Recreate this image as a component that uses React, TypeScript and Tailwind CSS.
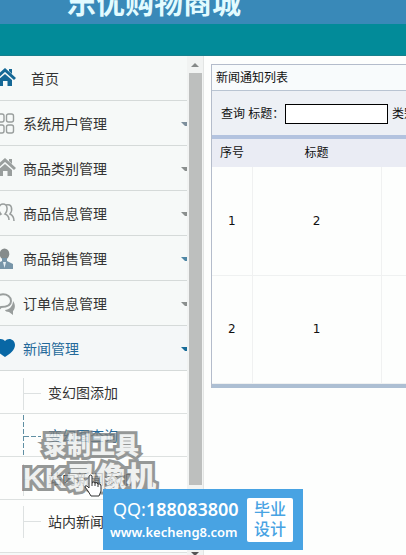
import type { ReactNode } from "react";

const menus = [
  { name: "系统用户管理", icon: "grid", arrow: "text-[#7d8f9c]" },
  { name: "商品类别管理", icon: "home", arrow: "text-[#8a8f8e]" },
  { name: "商品信息管理", icon: "users", arrow: "text-[#8a8f8e]" },
  { name: "商品销售管理", icon: "person", arrow: "text-[#4f87a5]" },
  { name: "订单信息管理", icon: "chat", arrow: "text-[#8a8f8e]" },
];

const news = [
  { id: 1, title: "2" },
  { id: 2, title: "1" },
];

const shapes: Record<string, ReactNode> = {
  home: (
    <>
      <path d="M-5 11 L5 2 L15 11" fill="none" stroke="currentColor" strokeWidth="3" />
      <path d="M-2 12 L5 6 L12 12 V18 H7.500 V13 H3 V18 H-2Z" fill="currentColor" />
      <path d="M9 1h3v5l-3-3z" fill="currentColor" />
    </>
  ),
  grid: (
    <g fill="none" stroke="currentColor" strokeWidth="1.4">
      <rect x="-3" y="1" width="7" height="8" rx="2" />
      <rect x="6.500" y="1" width="7" height="8" rx="2" />
      <rect x="-3" y="12" width="7" height="8" rx="2" />
      <rect x="6.500" y="12" width="7" height="8" rx="2" />
    </g>
  ),
  users: (
    <g fill="none" stroke="currentColor" strokeWidth="1.5">
      <path d="M-3 16c0-3 2-4 4-5-3-3-3-10 2-10s5 7 2 10c3 1 4 3 4 6" />
      <path d="M6 2c6-2 7 5 4 9 2 1 4 4 4 7" />
    </g>
  ),
  person: (
    <>
      <ellipse cx="4.500" cy="6" rx="4.800" ry="5.500" fill="#858b8b" />
      <path d="M2 10h5v3l6 3v5H-4v-5l6-3z" fill="#7795a8" />
      <path d="M3 14h3l-1.500 6z" fill="#e6eff3" />
    </>
  ),
  chat: (
    <>
      <path
        d="M-2 14c-2 0-3-3-3-6 0-9 16-9 16 0 0 6-7 6-10 6l-3 3z"
        fill="none"
        stroke="currentColor"
        strokeWidth="2"
      />
      <path d="M13 8c3 4 2 8 0 10v4l-4-3c-2 0-4-1-4-2 4 0 8-4 8-9z" fill="currentColor" />
    </>
  ),
  heart: (
    <path d="M5 3c3-4 10-2 10 4 0 5-5 9-10 12C0 16-5 12-5 7-5 1 2-1 5 3z" fill="currentColor" />
  ),
};

function Icon({ name }: { name: string }) {
  return (
    <svg className="h-[22px] w-4 shrink-0" viewBox="0 0 16 22" aria-hidden="true">
      {shapes[name]}
    </svg>
  );
}

function Arrow({ color }: { color: string }) {
  return (
    <svg className={`ml-auto h-1 w-[6px] ${color}`} viewBox="0 0 6 4" aria-hidden="true">
      <path d="M0 0h6v4H4z" fill="currentColor" />
    </svg>
  );
}

function Branch({ active }: { active?: boolean }) {
  return (
    <svg
      className={`h-[42px] w-12 shrink-0 ${active ? "text-[#5f8fa3]" : "text-[#dde1e1]"}`}
      viewBox="0 0 48 42"
      aria-hidden="true"
    >
      <path
        d={active ? "M23.500 0V42M24 21.500H41" : "M23.500 6V38M24 21.500H41"}
        fill="none"
        stroke="currentColor"
        strokeDasharray={active ? "5 2" : undefined}
      />
    </svg>
  );
}

function Sidebar() {
  return (
    <nav className="w-[187px] shrink-0 bg-[#f6f9f8] text-sm text-[#333]">
      <a href="#home" className="flex h-[45px] items-center border-b border-[#d5dad9] pt-[2px]">
        <span className="flex text-[#156896]">
          <Icon name="home" />
        </span>
        <span className="pl-[15px]">首页</span>
      </a>
      {menus.map((menu) => (
        <button
          key={menu.name}
          className="flex h-[45px] w-full items-center border-b border-[#d5dad9] pt-[2px] text-left"
        >
          <span className="flex text-[#999e9d]">
            <Icon name={menu.icon} />
          </span>
          <span className="pl-[7px]">{menu.name}</span>
          <Arrow color={menu.arrow} />
        </button>
      ))}
      <button className="flex h-[45px] w-full items-center border-b border-[#d5dad9] bg-[#f4f7f8] pt-[2px] text-left text-[#24699a]">
        <span className="flex text-[#0867a5]">
          <Icon name="heart" />
        </span>
        <span className="pl-[7px]">新闻管理</span>
        <Arrow color="text-[#176c99]" />
      </button>
      <div className="bg-[#fdfefd]">
        <a href="#add" className="flex h-[43px] items-center border-b border-[#dde1e0] pt-[2px]">
          <Branch />
          变幻图添加
        </a>
        <a
          href="#query"
          className="flex h-[43px] items-center border-b border-[#dde1e0] pt-[2px] text-[#24699a]"
        >
          <Branch active />
          变幻图查询
        </a>
        <a href="#news-add" className="flex h-[43px] items-center border-b border-[#dde1e0] pt-[2px]">
          <Branch />
          站内新闻添加
        </a>
        <a href="#news-query" className="flex h-[53px] items-start border-b border-[#dde1e0]">
          <Branch />
          <span className="pt-3">站内新闻</span>
        </a>
      </div>
    </nav>
  );
}

function ScrollTrack() {
  return (
    <div className="flex w-[17px] shrink-0 flex-col items-center border-r border-[#e3e5e4] bg-[#f1f3f2]">
      <svg className="h-[17px] w-4" viewBox="0 0 16 17" aria-hidden="true">
        <path d="M4 11L8 7l4 4z" fill="#858988" />
      </svg>
      <div className="h-[412px] w-[13px] bg-[#bdbfbe]" />
      <svg className="mt-auto h-1 w-4" viewBox="0 0 16 4" aria-hidden="true">
        <path d="M4 1h8L9 4H7z" fill="#555" />
      </svg>
    </div>
  );
}

function NewsList() {
  return (
    <main className="min-w-0 flex-1 overflow-hidden pt-2 pl-[7px] text-xs text-[#111]">
      <section className="border-t border-l border-[#b4bccb]">
        <h2 className="flex h-[26px] items-center border-b border-[#b9c4d2] bg-[#f8fbfc] pl-1">
          新闻通知列表
        </h2>
        <form className="flex h-11 items-center bg-[#edf0f5] pt-[2px] pl-[9px] whitespace-nowrap">
          <label htmlFor="title" className="w-16 shrink-0">
            查询 标题：
          </label>
          <input
            id="title"
            className="h-5 w-[103px] shrink-0 border border-black bg-white px-1 outline-none"
          />
          <span className="pl-1">类别</span>
        </form>
        <div className="border-y-4 border-t-[#b3c3df] border-b-[#adbfd3]">
          <table className="w-full table-fixed text-center">
            <colgroup>
              <col className="w-10" />
              <col className="w-[129px]" />
              <col />
            </colgroup>
            <thead>
              <tr className="h-7 bg-[#eaecf4]">
                <th className="font-normal">序号</th>
                <th className="font-normal">标题</th>
                <th />
              </tr>
            </thead>
            <tbody className="font-['DejaVu_Sans',sans-serif]">
              {news.map((item) => (
                <tr key={item.id} className="h-[108px] border-b border-[#eff1f1]">
                  <td className="border-r border-[#f0f1f1]">{item.id}</td>
                  <td className="border-r border-[#f0f1f1]">{item.title}</td>
                  <td />
                </tr>
              ))}
            </tbody>
          </table>
        </div>
      </section>
    </main>
  );
}

function Watermark() {
  return (
    <div className="pointer-events-none absolute top-[431px] left-[23px] font-black whitespace-nowrap text-[#eceeed] opacity-80 [-webkit-text-stroke:6px_#7c7f7e] [paint-order:stroke]">
      <div className="pl-5 text-2xl leading-[30px]">录制工具</div>
      <div className="text-3xl leading-[34px]">KK录像机</div>
    </div>
  );
}

function Cursor() {
  return (
    <svg
      className="pointer-events-none absolute top-[474px] left-[84px] h-6 w-[18px]"
      viewBox="0 0 18 24"
      aria-hidden="true"
    >
      <path
        d="M5 2q2-2 3 0v7q2-2 3 0 2-1 3 1 3-1 3 2v5l-2 5H7l-3-5-3-4q0-2 2-1l2 2z"
        fill="#fff"
        stroke="#333"
      />
      <path d="M8 9v3m3-3v3m3-2v3" stroke="#333" />
    </svg>
  );
}

function ContactBanner() {
  return (
    <aside className="absolute top-[489px] left-[103px] flex h-[61px] w-[200px] items-center bg-[#48a3e3] pl-[7px] text-white">
      <div className="w-[137px] whitespace-nowrap">
        <p className="pl-[3px] font-['Noto_Sans',sans-serif] text-lg leading-6">
          QQ:<span className="font-semibold">188083800</span>
        </p>
        <p className="font-['Noto_Sans',sans-serif] text-[13px] leading-[22px] font-semibold">
          www.kecheng8.com
        </p>
      </div>
      <div className="flex h-11 w-[46px] flex-col items-center justify-center rounded-xs bg-white text-base leading-5 font-medium text-[#48a3e3]">
        <span>毕业</span>
        <span>设计</span>
      </div>
    </aside>
  );
}

export default function App() {
  return (
    <div className="relative flex min-h-screen flex-col overflow-hidden bg-[#fdfefd] font-['Liberation_Sans','Noto_Sans_CJK_SC',sans-serif]">
      <header>
        <div className="flex h-6 items-end overflow-hidden bg-[#3989b8] pl-[67px]">
          <h1 className="text-[29px] leading-10 font-bold whitespace-nowrap text-[#e2fbff]">
            乐优购物商城
          </h1>
        </div>
        <div className="h-8 border-b border-[#16808d] bg-[#028b99]" />
      </header>
      <div className="flex flex-1">
        <Sidebar />
        <ScrollTrack />
        <NewsList />
      </div>
      <Watermark />
      <Cursor />
      <ContactBanner />
    </div>
  );
}
